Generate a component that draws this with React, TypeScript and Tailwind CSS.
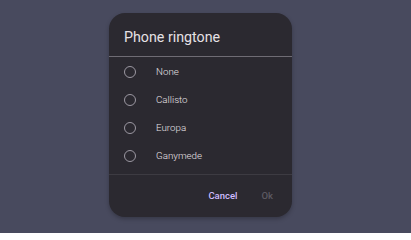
import React from "react";

const options = ["None", "Callisto", "Europa", "Ganymede"];

export default function App() {
  return (
    <div
      className="w-[411px] h-[233px] bg-[#484a5e] pt-[13px] pl-[109px]"
      style={{ fontFamily: "Roboto, 'Noto Sans', sans-serif" }}
    >
      <div className="w-[183px] h-[204px] rounded-[16px] bg-[#2b2930] flex flex-col shadow-[0_2px_4px_rgba(0,0,0,0.25)] overflow-hidden">
        <div className="h-[43px] pl-[15px] pt-[14px]">
          <div className="text-[14.25px] leading-[20px] text-[#e6e1e5]">Phone ringtone</div>
        </div>
        <div className="h-px bg-[#6f6c74]" />
        <div className="pt-px pb-[4px] flex flex-col">
          {options.map((o) => (
            <div key={o} className="h-[28px] flex items-center pl-[15px]">
              <div className="w-[12px] h-[12px] rounded-full border-[1.5px] border-[#9c98a2]" />
              <span className="ml-[20px] text-[9.75px] font-light leading-[14px] text-[#e6e1e5]">{o}</span>
            </div>
          ))}
        </div>
        <div className="h-px bg-[#3d3b42]" />
        <div className="flex-1 flex items-center justify-end pr-[19px] gap-[24px]">
          <span className="text-[9.5px] font-medium text-[#cfbcff] leading-[14px]">Cancel</span>
          <span className="text-[9.5px] font-medium text-[#5c5962] leading-[14px]">Ok</span>
        </div>
      </div>
    </div>
  );
}
